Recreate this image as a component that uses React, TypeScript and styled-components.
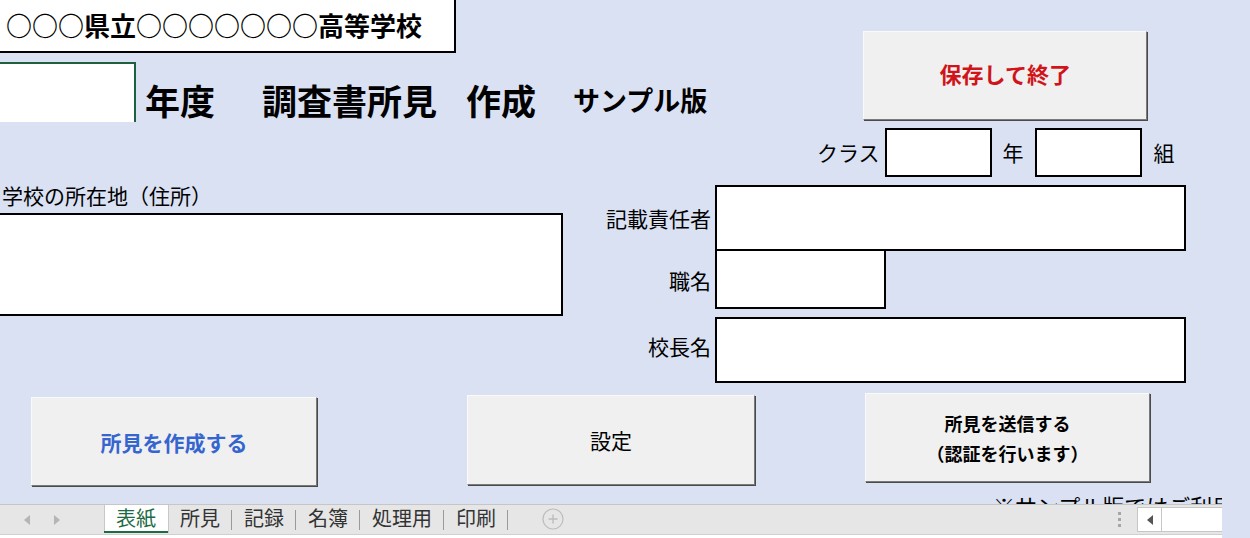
import styled, { createGlobalStyle } from 'styled-components';

const GlobalStyle = createGlobalStyle`
  html, body {
    margin: 0;
    padding: 0;
  }
  body {
    background: #d9e1f2;
    font-family: "Noto Sans CJK JP", "Noto Sans", sans-serif;
    color: #000;
  }
`;

const Page = styled.div`
  width: 1250px;
  height: 538px;
  overflow: hidden;
  display: flex;
  flex-direction: column;
  background: #d9e1f2;
`;

const Sheet = styled.div`
  height: 504px;
  flex-shrink: 0;
  overflow: hidden;
  display: flex;
  flex-direction: column;
`;

/* ---------- top ---------- */

const TopSection = styled.div`
  display: flex;
  align-items: flex-start;
  height: 122px;
`;

const TitleBlock = styled.div`
  display: flex;
  flex-direction: column;
`;

const SchoolName = styled.div`
  box-sizing: border-box;
  width: 458px;
  height: 55px;
  margin: -2px 0 0 -2px;
  padding-left: 6px;
  padding-bottom: 3px;
  border: 2px solid #000;
  background: #fff;
  display: flex;
  align-items: center;
  font-size: 26px;
  font-weight: 700;
  white-space: nowrap;
`;

const HeadingRow = styled.div`
  display: flex;
  align-items: center;
  height: 60px;
  margin-top: 9px;
  white-space: nowrap;
`;

const YearCell = styled.div`
  box-sizing: border-box;
  width: 136px;
  height: 60px;
  background: #fff;
  border-top: 2px solid #1f6040;
  border-right: 2px solid #1f6040;
`;

const Heading = styled.span<{ $ml: number; $size: number }>`
  margin-left: ${(p) => p.$ml}px;
  padding-top: 14px;
  font-size: ${(p) => p.$size}px;
  line-height: 1;
  font-weight: 700;
`;

/* ---------- buttons ---------- */

const SheetButton = styled.div<{
  $w: number;
  $h: number;
  $mt: number;
  $ml: number;
  $size: number;
  $color?: string;
  $bold?: boolean;
}>`
  box-sizing: border-box;
  flex-shrink: 0;
  width: ${(p) => p.$w}px;
  height: ${(p) => p.$h}px;
  margin-top: ${(p) => p.$mt}px;
  margin-left: ${(p) => p.$ml}px;
  background: #f0f0f0;
  border-top: 1px solid #fafafa;
  border-left: 1px solid #fafafa;
  border-right: 1px solid #7a7a7a;
  border-bottom: 1px solid #7a7a7a;
  box-shadow: 1px 1px 0 #4a4a4a;
  display: flex;
  flex-direction: column;
  align-items: center;
  justify-content: center;
  font-size: ${(p) => p.$size}px;
  font-weight: ${(p) => (p.$bold ? 700 : 400)};
  color: ${(p) => p.$color ?? '#000'};
  line-height: 30px;
  white-space: nowrap;
`;

/* ---------- class row ---------- */

const ClassRow = styled.div`
  display: flex;
  align-items: center;
  height: 49px;
  margin-top: 6px;
  padding-left: 817px;
`;

const Label = styled.span<{ $ml?: number }>`
  margin-left: ${(p) => p.$ml ?? 0}px;
  font-size: 21px;
  line-height: 1;
  white-space: nowrap;
`;

const InputBox = styled.div<{ $w: number; $h: number; $ml?: number; $mt?: number }>`
  box-sizing: border-box;
  flex-shrink: 0;
  width: ${(p) => p.$w}px;
  height: ${(p) => p.$h}px;
  margin-left: ${(p) => p.$ml ?? 0}px;
  margin-top: ${(p) => p.$mt ?? 0}px;
  background: #fff;
  border: 2px solid #000;
`;

/* ---------- middle ---------- */

const MidSection = styled.div`
  display: flex;
  align-items: flex-start;
  margin-top: 8px;
`;

const AddressColumn = styled.div`
  display: flex;
  flex-direction: column;
  margin-left: -2px;
  width: 565px;
`;

const AddressLabel = styled.div`
  padding-left: 4px;
  height: 20px;
  font-size: 21px;
  line-height: 20px;
  white-space: nowrap;
`;

const FormGrid = styled.div`
  display: grid;
  grid-template-columns: 111px auto;
  column-gap: 4px;
  margin-left: 37px;
`;

const FormLabel = styled.div`
  align-self: center;
  justify-self: end;
  font-size: 21px;
  line-height: 1;
  white-space: nowrap;
`;

/* ---------- bottom ---------- */

const ButtonRow = styled.div`
  display: flex;
  align-items: flex-start;
  margin-top: 10px;
`;

const Note = styled.div`
  width: 229px;
  overflow: hidden;
  margin-top: 8px;
  margin-left: 993px;
  font-size: 22px;
  line-height: 22px;
  white-space: nowrap;
`;

/* ---------- sheet tabs ---------- */

const TabBar = styled.div`
  box-sizing: border-box;
  width: 1222px;
  height: 31px;
  flex-shrink: 0;
  background: #e6e6e6;
  border-top: 1px solid #c6c6c6;
  border-bottom: 1px solid #cfcfcf;
  display: flex;
  align-items: flex-start;
`;

const BottomStrip = styled.div`
  width: 1222px;
  height: 3px;
  background: #fff;
`;

const NavArea = styled.div`
  width: 104px;
  height: 30px;
  display: flex;
  align-items: center;
  gap: 24px;
  padding-left: 24px;
  box-sizing: border-box;
`;

const Tab = styled.div<{ $active?: boolean }>`
  height: 26px;
  padding: 0 ${(p) => (p.$active ? 12 : 11)}px 0 12px;
  display: flex;
  align-items: center;
  font-size: 20px;
  line-height: 1;
  white-space: nowrap;
  color: ${(p) => (p.$active ? '#1d6a43' : '#333')};
  background: ${(p) => (p.$active ? '#fff' : 'transparent')};
  border-bottom: 2px solid ${(p) => (p.$active ? '#1d6a43' : 'transparent')};
  box-shadow: ${(p) => (p.$active ? 'inset 1px 0 0 #c8c8c8, 1px 0 0 #c8c8c8' : 'none')};
`;

const TabItem = styled.div`
  display: flex;
`;

const TabSep = styled.div`
  width: 1px;
  height: 20px;
  margin-top: 5px;
  background: #9a9a9a;
`;

const AddSheet = styled.div`
  margin-left: 34px;
  margin-top: 3px;
  display: flex;
`;

const Spacer = styled.div`
  flex: 1;
`;

const Dots = styled.div`
  display: flex;
  flex-direction: column;
  gap: 3px;
  margin-top: 7px;
  margin-right: 16px;
  span {
    width: 3px;
    height: 3px;
    background: #a6a6a6;
  }
`;

const ScrollBox = styled.div`
  box-sizing: border-box;
  width: 85px;
  height: 25px;
  margin-top: 2px;
  background: #fff;
  border: 1px solid #c6c6c6;
  border-right: none;
  display: flex;
`;

const ScrollArrow = styled.div`
  width: 23px;
  border-right: 1px solid #c6c6c6;
  display: flex;
  align-items: center;
  justify-content: center;
`;

const Triangle = ({ dir, color }: { dir: 'left' | 'right'; color: string }) => (
  <svg width="6" height="10" viewBox="0 0 6 10">
    {dir === 'left' ? (
      <polygon points="6,0 6,10 0,5" fill={color} />
    ) : (
      <polygon points="0,0 0,10 6,5" fill={color} />
    )}
  </svg>
);

const tabs = ['所見', '記録', '名簿', '処理用', '印刷'];

export default function App() {
  return (
    <>
      <GlobalStyle />
      <Page>
        <Sheet>
          <TopSection>
            <TitleBlock>
              <SchoolName>○○○県立○○○○○○○高等学校</SchoolName>
              <HeadingRow>
                <YearCell />
                <Heading $ml={9} $size={35}>年度</Heading>
                <Heading $ml={47} $size={35}>調査書所見</Heading>
                <Heading $ml={29} $size={35}>作成</Heading>
                <Heading $ml={37} $size={27}>サンプル版</Heading>
              </HeadingRow>
            </TitleBlock>
            <SheetButton
              $w={284}
              $h={89}
              $mt={31}
              $ml={156}
              $size={22}
              $bold
              $color="#d0141a"
            >
              <span style={{ marginTop: -6 }}>保存して終了</span>
            </SheetButton>
          </TopSection>

          <ClassRow>
            <Label>クラス</Label>
            <InputBox $w={107} $h={49} $ml={5} />
            <Label $ml={11}>年</Label>
            <InputBox $w={107} $h={49} $ml={11} />
            <Label $ml={12}>組</Label>
          </ClassRow>

          <MidSection>
            <AddressColumn>
              <AddressLabel>学校の所在地（住所）</AddressLabel>
              <InputBox $w={565} $h={103} $mt={8} />
            </AddressColumn>
            <FormGrid>
              <FormLabel>記載責任者</FormLabel>
              <InputBox $w={471} $h={66} />
              <FormLabel>職名</FormLabel>
              <InputBox $w={171} $h={60} $mt={-2} />
              <FormLabel>校長名</FormLabel>
              <InputBox $w={471} $h={66} $mt={8} />
            </FormGrid>
          </MidSection>

          <ButtonRow>
            <SheetButton $w={286} $h={89} $mt={4} $ml={31} $size={21} $bold $color="#3565cf">
              所見を作成する
            </SheetButton>
            <SheetButton $w={288} $h={90} $mt={2} $ml={150} $size={21}>
              設定
            </SheetButton>
            <SheetButton $w={285} $h={89} $mt={0} $ml={110} $size={18} $bold>
              <span>所見を送信する</span>
              <span>（認証を行います）</span>
            </SheetButton>
          </ButtonRow>

          <Note>※サンプル版ではご利用いただけません</Note>
        </Sheet>

        <TabBar>
          <NavArea>
            <Triangle dir="left" color="#b5b5b5" />
            <Triangle dir="right" color="#b5b5b5" />
          </NavArea>
          <Tab $active>表紙</Tab>
          {tabs.map((t) => (
            <TabItem key={t}>
              <Tab>{t}</Tab>
              <TabSep />
            </TabItem>
          ))}
          <AddSheet>
            <svg width="22" height="22" viewBox="0 0 22 22">
              <circle cx="11" cy="11" r="10" fill="none" stroke="#bdbdbd" strokeWidth="1.2" />
              <path d="M11 6.5v9M6.5 11h9" stroke="#bdbdbd" strokeWidth="1.4" />
            </svg>
          </AddSheet>
          <Spacer />
          <Dots>
            <span />
            <span />
            <span />
          </Dots>
          <ScrollBox>
            <ScrollArrow>
              <Triangle dir="left" color="#555" />
            </ScrollArrow>
          </ScrollBox>
        </TabBar>
        <BottomStrip />
      </Page>
    </>
  );
}
